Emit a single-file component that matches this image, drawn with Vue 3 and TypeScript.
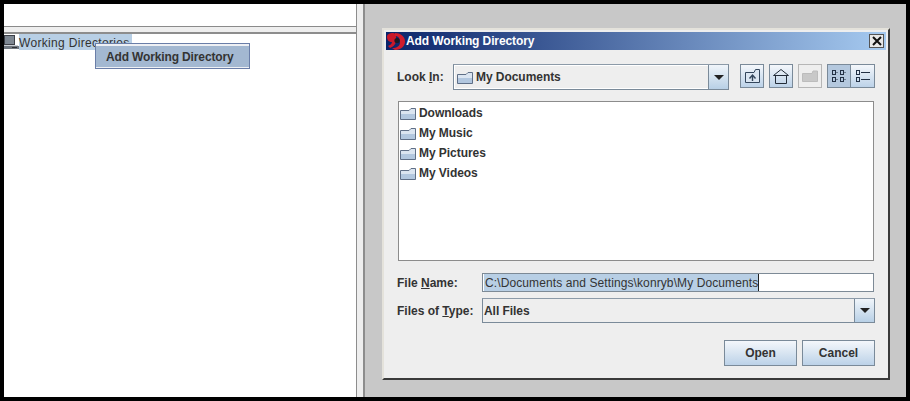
<template>
  <div class="screen">
    <div class="left">
      <div class="top-pane"></div>
      <div class="divider"></div>
      <div class="tree">
        <div class="tree-row">
          <svg class="computer" width="15" height="14" viewBox="0 0 15 14">
            <rect x="0" y="0" width="11" height="10" fill="#3c4048" />
            <rect x="1" y="1" width="9" height="8" fill="#7d8792" />
            <rect x="0" y="10" width="14" height="1" fill="#c9ced4" />
            <rect x="0" y="11" width="15" height="3" fill="#6f7780" />
            <rect x="8" y="12" width="5" height="1" fill="#2f3338" />
          </svg>
          <span class="tree-label">Working Directories</span>
        </div>
        <div class="menu">
          <div class="menu-item">Add Working Directory</div>
        </div>
      </div>
    </div>
    <div class="sash"></div>
    <div class="desk">
      <div class="dialog">
        <div class="title-bar">
          <svg class="logo" width="18" height="17" viewBox="0 0 18 17">
            <path d="M0 4 C0 1 3 0 6 0 C8 0 9 2 9 4 L9 9 C8 12 6 14 3 15 L1 13 C3 12 5 11 5 9 C2 9 0 7 0 4 Z" fill="#c9182a" />
            <path d="M8 0 C13 0 18 3 18 8.500 C18 13 14 17 8 17 L5 15 C10 15 13 13 13 9 C13 5 11 3 8 3 Z" fill="#d01c2c" />
            <circle cx="10" cy="7.500" r="2.600" fill="#1c1a24" />
          </svg>
          <span class="title">Add Working Directory</span>
          <button class="close">
            <svg width="10" height="10" viewBox="0 0 10 10">
              <path d="M1 1 L9 9 M9 1 L1 9" stroke="#111" stroke-width="2" />
            </svg>
          </button>
        </div>
        <div class="body">
          <div class="look-row">
            <span class="look-label">Look <u>I</u>n:</span>
            <div class="combo look-combo">
              <div class="combo-value">
                <svg class="folder" width="16" height="13" viewBox="0 0 16 13">
                  <path d="M0.500 3.500 H9 L11 1.500 H15.500 V12.500 H0.500 Z" fill="#dbe5f1" stroke="#5f6f87" />
                  <rect x="1" y="7" width="14" height="5" fill="#b2c7df" />
                </svg>
                My Documents
              </div>
              <div class="combo-arrow"><i class="arrow"></i></div>
            </div>
            <div class="tools">
              <button class="tool">
                <svg width="15" height="14" viewBox="0 0 15 14" fill="none" stroke="#33465c">
                  <path d="M0.500 3.500 H9 L10.500 0.500 H14.500 V13.500 H0.500 Z" fill="#dbe6f2" />
                  <path d="M7.500 12 V6.500 M4.500 9.500 L7.500 6 L10.500 9.500" stroke-width="1.400" />
                </svg>
              </button>
              <button class="tool">
                <svg width="16" height="15" viewBox="0 0 16 15" fill="none" stroke="#222c38">
                  <path d="M0.500 6.500 L8 0.500 L15.500 6.500 Z" />
                  <path d="M2.500 6.500 V14.500 H13.500 V6.500" />
                </svg>
              </button>
              <button class="tool disabled">
                <svg width="16" height="12" viewBox="0 0 16 12">
                  <path d="M0.500 3.500 H10 L11 1 H15.500 V11.500 H0.500 Z" fill="#c8c8c8" stroke="#bcbcbc" />
                </svg>
              </button>
              <div class="view-group">
                <button class="tool view on">
                  <svg width="15" height="12" viewBox="0 0 15 12" fill="none" stroke="#223044">
                    <rect x="0.500" y="0.500" width="3" height="4" />
                    <rect x="8.500" y="0.500" width="3" height="4" />
                    <rect x="0.500" y="7.500" width="3" height="4" />
                    <rect x="8.500" y="7.500" width="3" height="4" />
                    <path d="M5 2 V3 M13 2 V3 M5 9 V10 M13 9 V10" />
                  </svg>
                </button>
                <button class="tool view">
                  <svg width="14" height="12" viewBox="0 0 14 12" fill="none" stroke="#223044">
                    <rect x="0.500" y="0.500" width="3" height="4" />
                    <rect x="0.500" y="7.500" width="3" height="4" />
                    <path d="M5 2.500 H14 M5 9.500 H14" />
                  </svg>
                </button>
              </div>
            </div>
          </div>

          <div class="file-list">
            <div v-for="name in folders" :key="name" class="file-row">
              <svg class="folder" width="16" height="13" viewBox="0 0 16 13">
                <path d="M0.500 3.500 H9 L11 1.500 H15.500 V12.500 H0.500 Z" fill="#dbe5f1" stroke="#5f6f87" />
                <rect x="1" y="7" width="14" height="5" fill="#b2c7df" />
              </svg>
              {{ name }}
            </div>
          </div>

          <div class="field-row name-row">
            <span class="field-label">File <u>N</u>ame:</span>
            <div class="text-input">
              <span class="selected">C:\Documents and Settings\konryb\My Documents</span><i class="caret"></i>
            </div>
          </div>

          <div class="field-row type-row">
            <span class="field-label">Files of <u>T</u>ype:</span>
            <div class="combo type-combo">
              <div class="combo-value type-value">All Files</div>
              <div class="combo-arrow"><i class="arrow"></i></div>
            </div>
          </div>

          <div class="actions">
            <button class="action">Open</button>
            <button class="action">Cancel</button>
          </div>
        </div>
      </div>
    </div>
  </div>
</template>

<script setup lang="ts">
const folders: string[] = ['Downloads', 'My Music', 'My Pictures', 'My Videos']
</script>

<style>
html,
body {
  margin: 0;
  background: #000;
}
</style>

<style scoped>
.screen {
  width: 910px;
  height: 401px;
  box-sizing: border-box;
  border: 4px solid #000;
  display: flex;
  background: #c8c8c8;
  font-family: "Liberation Sans", Arial, sans-serif;
  font-size: 12px;
  font-weight: 700;
  color: #333;
  overflow: hidden;
}

/* left side */
.left {
  width: 352px;
  flex: none;
  display: flex;
  flex-direction: column;
  background: #fff;
  border-right: 1px solid #8d8d8d;
}
.top-pane {
  height: 22px;
  border-bottom: 1px solid #8a8a8a;
  background: #fff;
}
.divider {
  height: 5px;
  background: #eeeeee;
  border-bottom: 2px solid #8d8d8d;
}
.tree {
  flex: 1;
  position: relative;
  background: #fff;
}
.tree-row {
  display: flex;
  align-items: center;
  height: 16px;
}
.computer {
  flex: none;
}
.tree-label {
  padding: 1px 2px 0 0;
  height: 16px;
  line-height: 17px;
  box-sizing: border-box;
  background: #b8cfe5;
  color: #333;
  font-weight: 400;
  letter-spacing: 0.32px;
}
.menu {
  position: absolute;
  left: 91px;
  top: 9px;
  width: 155px;
  height: 26px;
  box-sizing: border-box;
  border: 1px solid #6a7ea8;
  background: #eef0f4;
  padding-top: 2px;
}
.menu-item {
  height: 21px;
  line-height: 23px;
  padding-left: 10px;
  background: #a3b8d1;
  color: #333;
  letter-spacing: -0.14px;
}
.sash {
  width: 6px;
  flex: none;
  background: #eeeeee;
  border-right: 2px solid #8d8d8d;
}

/* dialog */
.desk {
  flex: 1;
  padding: 24px 17px 17px 17px;
  background: #c8c8c8;
}
.dialog {
  height: 352px;
  box-sizing: border-box;
  background: #eeeeee;
  border: 2px solid #e4e2db;
  border-right-color: #3a3a3a;
  border-bottom-color: #3a3a3a;
  padding: 2px;
  display: flex;
  flex-direction: column;
}
.title-bar {
  height: 18px;
  flex: none;
  display: flex;
  align-items: center;
  background: linear-gradient(90deg, #0a246a 0%, #a6caf0 100%);
  color: #fff;
}
.logo {
  flex: none;
  margin-left: 1px;
}
.title {
  margin-left: 1px;
  letter-spacing: -0.1px;
}
.close {
  margin-left: auto;
  margin-right: 2px;
  width: 15px;
  height: 14px;
  padding: 0;
  display: flex;
  align-items: center;
  justify-content: center;
  background: #e8e8e8;
  border: 1px solid #555;
}
.body {
  flex: 1;
  display: flex;
  flex-direction: column;
  padding: 14px 11px 0 11px;
}
.look-row {
  display: flex;
  align-items: flex-start;
}
.look-label {
  width: 56px;
  line-height: 26px;
  flex: none;
}
.combo {
  display: flex;
  box-sizing: border-box;
  border: 1px solid #7a8a99;
  border-top-color: #8c9aa8;
  background: #eeeeee;
}
.look-combo {
  width: 276px;
  height: 26px;
  flex: none;
}
.combo-value {
  flex: 1;
  display: flex;
  align-items: center;
  gap: 3px;
  padding-left: 2px;
  border: 1px solid #fff;
  border-right: 0;
  letter-spacing: -0.05px;
}
.combo-arrow {
  width: 19px;
  display: flex;
  align-items: center;
  justify-content: center;
  border-left: 1px solid #7a8a99;
  background: linear-gradient(#f0f5fa, #b8d0e6);
}
.arrow {
  width: 0;
  height: 0;
  border-left: 5px solid transparent;
  border-right: 5px solid transparent;
  border-top: 5px solid #222;
}
.tools {
  display: flex;
  margin-left: 11px;
  gap: 5px;
}
.tool {
  width: 24px;
  height: 24px;
  padding: 0;
  display: flex;
  align-items: center;
  justify-content: center;
  box-sizing: border-box;
  border: 1px solid #7a8a99;
  background: linear-gradient(#f4f7fb, #bcd2e8);
}
.tool.disabled {
  border-color: #b6b6b6;
  background: #eeeeee;
}
.view-group {
  display: flex;
}
.view {
  background: linear-gradient(#f4f7fb, #bcd2e8);
}
.view + .view {
  border-left: 0;
}
.view.on {
  background: #b4c8de;
}
.file-list {
  margin-top: 11px;
  margin-left: 1px;
  width: 476px;
  height: 160px;
  box-sizing: border-box;
  flex: none;
  background: #fff;
  border: 1px solid #8c8c8c;
  padding-top: 1px;
}
.file-row {
  height: 20px;
  display: flex;
  align-items: center;
  gap: 3px;
  padding-left: 1px;
  color: #333;
  letter-spacing: -0.05px;
}
.folder {
  flex: none;
}
.field-row {
  display: flex;
  align-items: center;
}
.name-row {
  margin-top: 12px;
  height: 19px;
}
.type-row {
  margin-top: 6px;
  height: 25px;
}
.field-label {
  width: 85px;
  flex: none;
}
.text-input {
  width: 392px;
  height: 19px;
  box-sizing: border-box;
  flex: none;
  background: #fff;
  border: 1px solid #7d8a96;
  display: flex;
  align-items: center;
  padding-left: 1px;
}
.selected {
  background: #b8cfe5;
  height: 17px;
  line-height: 19px;
  padding-left: 1px;
  font-weight: 400;
  color: #333;
  letter-spacing: 0.1px;
  white-space: nowrap;
}
.caret {
  width: 1px;
  height: 17px;
  background: #222;
}
.type-combo {
  width: 393px;
  height: 25px;
  flex: none;
}
.type-value {
  padding-left: 1px;
  border: 0;
}
.actions {
  display: flex;
  justify-content: flex-end;
  gap: 5px;
  margin-top: 17px;
}
.action {
  width: 73px;
  height: 26px;
  padding: 0;
  box-sizing: border-box;
  border: 1px solid #7a8a99;
  background: linear-gradient(#f4f7fb, #bcd2e8);
  font: inherit;
  color: #333;
}
</style>
